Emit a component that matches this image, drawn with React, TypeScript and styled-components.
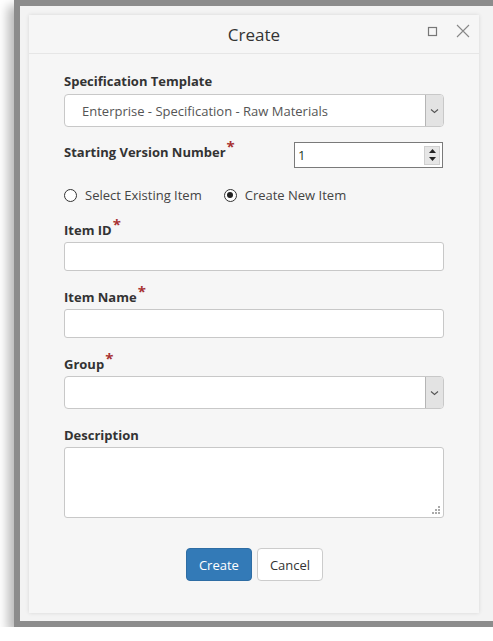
import * as React from 'react'
import styled, {createGlobalStyle} from 'styled-components'

const Global = createGlobalStyle`
  html, body {
    margin: 0;
    padding: 0;
    background: #ffffff;
    overflow: hidden;
  }
  body {
    font-family: "Open Sans", "Noto Sans", sans-serif;
    color: #333;
  }
`

const Frame = styled.div`
  margin-left: 14px;
  width: 467px;
  height: 598px;
  border: 6px solid #8c8c8c;
  background: #f3f3f3;
  box-shadow: -6px 6px 10px rgba(0, 0, 0, 0.28);
  padding: 9px 8px 8px 9px;
  box-sizing: content-box;
  position: relative;
`

const Panel = styled.div`
  width: 450px;
  height: 598px;
  background: #f6f6f6;
  box-shadow: 0 0 4px rgba(0, 0, 0, 0.12);
  display: flex;
  flex-direction: column;
`

const Header = styled.div`
  height: 38px;
  border-bottom: 1px solid #e6e6e6;
  display: flex;
  align-items: center;
  justify-content: center;
  position: relative;
`

const Title = styled.div`
  font-size: 17px;
  color: #333;
  padding-top: 1px;
`

const Actions = styled.div`
  position: absolute;
  right: 9px;
  top: 9px;
  display: flex;
  gap: 18px;
  align-items: center;
`

const Body = styled.div`
  padding: 18px 35px 0 35px;
  display: flex;
  flex-direction: column;
`

const Label = styled.div<{ $mt?: number; $pt?: number }>`
  font-size: 13px;
  font-weight: 700;
  color: #333;
  margin-top: ${p => p.$mt ?? 0}px;
  padding-top: ${p => p.$pt ?? 0}px;
  line-height: 18px;
  height: 18px;
`

const Req = styled.span`
  color: #a83232;
  font-size: 15px;
  line-height: 0;
  position: relative;
  top: -5px;
  margin-left: 1px;
`

const SelectBox = styled.div<{ $mt?: number }>`
  margin-top: ${p => p.$mt ?? 0}px;
  height: 31px;
  border: 1px solid #c8c8c8;
  border-radius: 4px;
  background: #fff;
  display: flex;
  align-items: stretch;
  overflow: hidden;
`

const SelectText = styled.div`
  flex: 1;
  font-size: 13px;
  color: #555;
  display: flex;
  align-items: center;
  padding-left: 17px;
`

const Arrow = styled.div`
  width: 17px;
  background: #e3e3e3;
  border-left: 1px solid #b5b5b5;
  display: flex;
  align-items: center;
  justify-content: center;
`

const VersionRow = styled.div`
  margin-top: 14px;
  display: flex;
  justify-content: space-between;
  align-items: flex-start;
`

const NumberBox = styled.div`
  width: 142px;
  height: 24px;
  border: 1px solid #7a7a7a;
  background: #fff;
  display: flex;
  align-items: center;
  justify-content: space-between;
  padding: 0 2px 0 3px;
  box-sizing: content-box;
  margin-right: 1px;
  margin-top: 1px;
`

const NumberText = styled.span`
  font-size: 13px;
  color: #1f3a1f;
`

const Spinner = styled.div`
  width: 14px;
  height: 17px;
  background: #e6e6e6;
  border: 1px solid #cfcfcf;
  display: flex;
  flex-direction: column;
  align-items: center;
  justify-content: space-around;
`

const RadioRow = styled.div`
  margin-top: 18px;
  display: flex;
  gap: 22px;
  font-size: 13px;
  color: #444;
`

const Radio = styled.label`
  display: flex;
  align-items: center;
  gap: 8px;
`

const Circle = styled.span<{ $on?: boolean }>`
  width: 11px;
  height: 11px;
  border: 1px solid #333;
  border-radius: 50%;
  display: flex;
  align-items: center;
  justify-content: center;
  background: #fff;
  &::after {
    content: '';
    width: 6px;
    height: 6px;
    border-radius: 50%;
    background: ${p => (p.$on ? '#222' : 'transparent')};
  }
`

const Input = styled.div<{ $h?: number; $mt?: number }>`
  margin-top: ${p => p.$mt ?? 0}px;
  height: ${p => p.$h ?? 27}px;
  border: 1px solid #c8c8c8;
  border-radius: 3px;
  background: #fff;
  position: relative;
`

const Grip = styled.svg`
  position: absolute;
  right: 3px;
  bottom: 3px;
`

const Buttons = styled.div`
  margin-top: 30px;
  display: flex;
  justify-content: center;
  gap: 5px;
  padding-left: 1px;
`

const Button = styled.button<{ $primary?: boolean }>`
  height: 33px;
  padding: 0 12px;
  font-family: inherit;
  font-size: 13px;
  border-radius: 4px;
  border: 1px solid ${p => (p.$primary ? '#2e6da4' : '#cccccc')};
  background: ${p => (p.$primary ? '#337ab7' : '#ffffff')};
  color: ${p => (p.$primary ? '#ffffff' : '#333333')};
`

const ResizeHandle = styled.svg`
  position: absolute;
  right: 3px;
  bottom: 4px;
`

const Chevron = () => (
    <svg width="9" height="6" viewBox="0 0 9 6">
        <path d="M1 1.5 L4.5 4.5 L8 1.5" fill="none" stroke="#555" strokeWidth="1.1"/>
    </svg>
)

export default function App() {
    return (
        <>
            <Global/>
            <Frame>
                <Panel>
                    <Header>
                        <Title>Create</Title>
                        <Actions>
                            <svg width="11" height="11" viewBox="0 0 11 11">
                                <rect x="1.5" y="1.5" width="8" height="8" fill="none" stroke="#777" strokeWidth="1.2"/>
                            </svg>
                            <svg width="14" height="14" viewBox="0 0 14 14">
                                <path d="M1 1 L13 13 M13 1 L1 13" stroke="#888" strokeWidth="1.1"/>
                            </svg>
                        </Actions>
                    </Header>
                    <Body>
                        <Label>Specification Template</Label>
                        <SelectBox $mt={4}>
                            <SelectText>Enterprise - Specification - Raw Materials</SelectText>
                            <Arrow><Chevron/></Arrow>
                        </SelectBox>
                        <VersionRow>
                            <Label $pt={2}>Starting Version Number<Req>*</Req></Label>
                            <NumberBox>
                                <NumberText>1</NumberText>
                                <Spinner>
                                    <svg width="7" height="4" viewBox="0 0 7 4"><path d="M0 4 L3.5 0 L7 4 Z" fill="#222"/></svg>
                                    <svg width="7" height="4" viewBox="0 0 7 4"><path d="M0 0 L3.5 4 L7 0 Z" fill="#222"/></svg>
                                </Spinner>
                            </NumberBox>
                        </VersionRow>
                        <RadioRow>
                            <Radio><Circle/>Select Existing Item</Radio>
                            <Radio><Circle $on/>Create New Item</Radio>
                        </RadioRow>
                        <Label $mt={17}>Item ID<Req>*</Req></Label>
                        <Input $mt={3}/>
                        <Label $mt={17}>Item Name<Req>*</Req></Label>
                        <Input $mt={3}/>
                        <Label $mt={17}>Group<Req>*</Req></Label>
                        <SelectBox $mt={3}>
                            <SelectText/>
                            <Arrow><Chevron/></Arrow>
                        </SelectBox>
                        <Label $mt={17}>Description</Label>
                        <Input $mt={3} $h={69}>
                            <Grip width="8" height="8" viewBox="0 0 8 8">
                                <rect x="6" y="0" width="2" height="2" fill="#aaa"/>
                                <rect x="3" y="3" width="2" height="2" fill="#aaa"/>
                                <rect x="6" y="3" width="2" height="2" fill="#aaa"/>
                                <rect x="0" y="6" width="2" height="2" fill="#aaa"/>
                                <rect x="3" y="6" width="2" height="2" fill="#aaa"/>
                                <rect x="6" y="6" width="2" height="2" fill="#aaa"/>
                            </Grip>
                        </Input>
                        <Buttons>
                            <Button $primary>Create</Button>
                            <Button>Cancel</Button>
                        </Buttons>
                    </Body>
                </Panel>
                <ResizeHandle width="7" height="7" viewBox="0 0 7 7">
                    <path d="M7 0 L7 7 L0 7 Z" fill="#ff1493"/>
                    <path d="M6 2 L5 3 M4 4 L3 5 M6 4 L5 5" stroke="#fff" strokeWidth="0.6"/>
                </ResizeHandle>
            </Frame>
        </>
    )
}
